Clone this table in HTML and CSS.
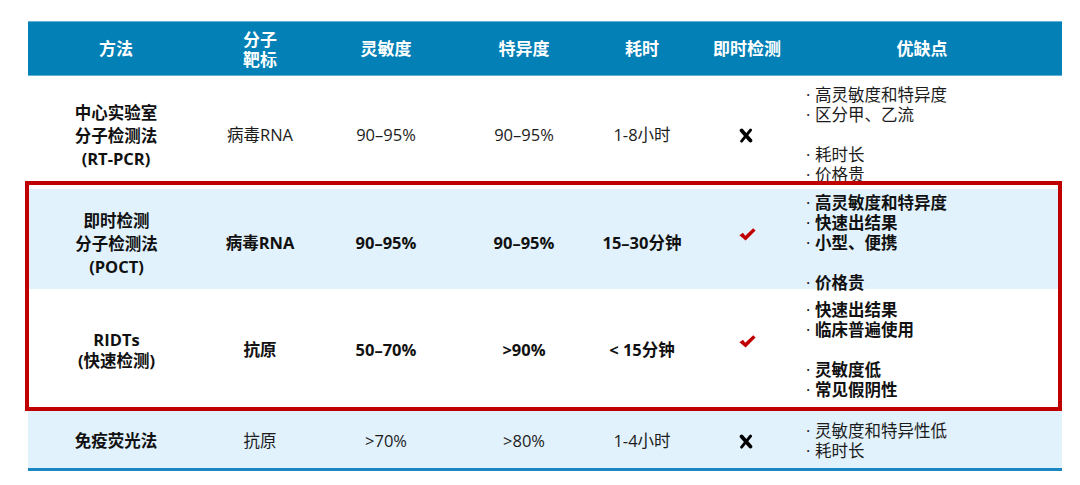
FILE: index.html
```html
<!DOCTYPE html>
<html lang="zh">
<head>
<meta charset="utf-8">
<title>检测方法比较</title>
<link rel="stylesheet" href="styles.css">
</head>
<body>
<div class="table">
  <div class="row head">
    <div class="c">方法</div>
    <div class="c two">分子<br>靶标</div>
    <div class="c">灵敏度</div>
    <div class="c">特异度</div>
    <div class="c">耗时</div>
    <div class="c">即时检测</div>
    <div class="c hd7">优缺点</div>
  </div>

  <div class="row r1">
    <div class="c b lines">中心实验室<br>分子检测法<br>(RT-PCR)</div>
    <div class="c">病毒RNA</div>
    <div class="c">90–95%</div>
    <div class="c">90–95%</div>
    <div class="c">1-8小时</div>
    <div class="c"><svg class="x" width="14" height="15" viewBox="0 0 14 15"><path d="M2.6 2.4 L11.4 12.6" stroke="#000" stroke-width="3.8" stroke-linecap="round" fill="none"/><path d="M11.6 2 L2.6 13.2" stroke="#000" stroke-width="2.8" stroke-linecap="round" fill="none"/></svg></div>
    <div class="c list">
      <ul>
        <li>高灵敏度和特异度</li>
        <li>区分甲、乙流</li>
        <li class="gap">耗时长</li>
        <li>价格贵</li>
      </ul>
    </div>
  </div>

  <div class="box">
    <div class="row r2 blue bold">
      <div class="c lines">即时检测<br>分子检测法<br>(POCT)</div>
      <div class="c">病毒RNA</div>
      <div class="c">90–95%</div>
      <div class="c">90–95%</div>
      <div class="c">15–30分钟</div>
      <div class="c"><svg class="ok" width="17" height="13" viewBox="0 0 17 13"><path d="M0.4 7.2 L4 4.8 L6.2 7.8 L14.2 0.3 L16.6 2.4 L6.6 12.6 Z" fill="#c00000"/></svg></div>
      <div class="c list">
        <ul>
          <li>高灵敏度和特异度</li>
          <li>快速出结果</li>
          <li>小型、便携</li>
          <li class="gap">价格贵</li>
        </ul>
      </div>
    </div>
    <div class="row r3 bold">
      <div class="c lines tight">RIDTs<br>(快速检测)</div>
      <div class="c">抗原</div>
      <div class="c">50–70%</div>
      <div class="c">&gt;90%</div>
      <div class="c">&lt; 15分钟</div>
      <div class="c"><svg class="ok" width="17" height="13" viewBox="0 0 17 13"><path d="M0.4 7.2 L4 4.8 L6.2 7.8 L14.2 0.3 L16.6 2.4 L6.6 12.6 Z" fill="#c00000"/></svg></div>
      <div class="c list">
        <ul>
          <li>快速出结果</li>
          <li>临床普遍使用</li>
          <li class="gap">灵敏度低</li>
          <li>常见假阴性</li>
        </ul>
      </div>
    </div>
  </div>

  <div class="row r4 blue">
    <div class="c b">免疫荧光法</div>
    <div class="c">抗原</div>
    <div class="c">&gt;70%</div>
    <div class="c">&gt;80%</div>
    <div class="c">1-4小时</div>
    <div class="c"><svg class="x" width="14" height="15" viewBox="0 0 14 15"><path d="M2.6 2.4 L11.4 12.6" stroke="#000" stroke-width="3.8" stroke-linecap="round" fill="none"/><path d="M11.6 2 L2.6 13.2" stroke="#000" stroke-width="2.8" stroke-linecap="round" fill="none"/></svg></div>
    <div class="c list">
      <ul>
        <li>灵敏度和特异性低</li>
        <li>耗时长</li>
      </ul>
    </div>
  </div>
</div>
</body>
</html>
```

FILE: styles.css
```css
* { box-sizing: border-box; }

html, body {
  margin: 0;
  padding: 0;
  background: #ffffff;
}

body {
  font-family: "Open Sans", "Noto Sans CJK SC", sans-serif;
  font-size: 16.5px;
  color: #1c1c1c;
}

.table {
  margin: 21px 0 0 28px;
  width: 1034px;
}

.row {
  display: grid;
  grid-template-columns: 176px 112px 140px 136px 100px 110px 1fr;
}

.c {
  display: flex;
  align-items: center;
  justify-content: center;
  text-align: center;
  line-height: 20px;
}

.head {
  height: 55px;
  background: #0380b6;
  border-top: 1px solid #62b2d8;
  border-bottom: 1px solid #62b2d8;
  color: #ffffff;
  font-weight: bold;
  font-size: 17px;
}

.head .two { line-height: 20px; padding-top: 2px; }

.head .hd7 { padding-right: 20px; }

.b { font-weight: bold; color: #111111; }

.bold { font-weight: bold; color: #111111; }

.lines { line-height: 23px; }

.lines.tight { line-height: 21px; }

.list { justify-content: flex-start; padding-left: 4px; }

.list ul {
  list-style: none;
  margin: 0;
  padding: 0;
  text-align: left;
}

.list li::before {
  content: "·";
  display: inline-block;
  width: 9px;
  font-weight: normal;
}

.list li.gap { margin-top: 20px; }

.r1 {
  height: 105px;
  padding-top: 9px;
}

.box {
  position: relative;
  margin-left: -3px;
  width: 1037px;
  border: 4px solid #c00000;
}

.box .row {
  grid-template-columns: 175px 112px 140px 136px 100px 110px 1fr;
}

.blue { background: #e1f2fc; }

.r2 {
  margin-top: 4px;
  height: 100px;
  padding-top: 4px;
}

.r3 {
  height: 118px;
  padding-top: 4px;
}

.r4 {
  height: 60px;
  padding-top: 3px;
  border-bottom: 3px solid #1b87c0;
}

.ok { margin-top: -18px; }

.x { margin-left: -2px; }
```
